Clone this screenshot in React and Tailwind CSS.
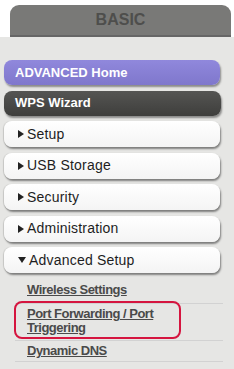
import React from "react";

const Right = () => (
  <svg width="6" height="8" viewBox="0 0 6 8" className="shrink-0">
    <path d="M0 0 L6 4 L0 8 Z" fill="#222" />
  </svg>
);
const Down = () => (
  <svg width="8" height="6" viewBox="0 0 8 6" className="shrink-0">
    <path d="M0 0 L8 0 L4 6 Z" fill="#222" />
  </svg>
);

function WhiteBtn({ label, open }) {
  return (
    <div className="h-[26px] mr-[14px] ml-[4px] rounded-[8px] bg-gradient-to-b from-white to-[#f4f4f4] shadow-[1px_2px_2px_rgba(0,0,0,0.45),-1px_0_1px_rgba(0,0,0,0.12)] flex items-center pl-[14px] gap-[3px] text-[14px] text-[#1e1e1e] tracking-[0.2px]">
      {open ? <Down /> : <Right />}
      <span>{label}</span>
    </div>
  );
}

export default function App() {
  return (
    <div className="w-[234px] h-[369px] overflow-hidden bg-[#e6e6e4] font-['Liberation_Sans',Arial,sans-serif]">
      <div className="bg-white pt-[5px] pl-[10px] pr-[3px]">
        <div className="h-[32px] rounded-t-[9px] bg-[#797977] border-b-[2px] border-[#666] flex items-center justify-center text-[16px] font-bold text-[#4e4e4c]">
          BASIC
        </div>
      </div>
      <div className="pt-[23px] flex flex-col gap-[5.5px]">
        <div className="h-[25px] mr-[14px] ml-[4px] rounded-[8px] bg-gradient-to-b from-[#9088dc] to-[#7f77cc] shadow-[1px_2px_2px_rgba(0,0,0,0.4)] flex items-center pl-[11px] text-[13px] font-bold text-white">
          ADVANCED Home
        </div>
        <div className="h-[25px] mr-[13px] ml-[4px] rounded-[8px] bg-gradient-to-b from-[#555553] to-[#3e3e3c] shadow-[1px_2px_2px_rgba(0,0,0,0.4)] flex items-center pl-[11px] text-[13px] font-bold text-white">
          WPS Wizard
        </div>
        <WhiteBtn label="Setup" />
        <WhiteBtn label="USB Storage" />
        <WhiteBtn label="Security" />
        <WhiteBtn label="Administration" />
        <WhiteBtn label="Advanced Setup" open />
      </div>
      <div className="ml-[15px] mr-[11px] text-[13px] font-bold text-[#4a4a4a] leading-[14px] tracking-[-0.5px]">
        <div className="pt-[10px] pb-[6px] pl-[12px] border-b border-[#d2d2d2]">
          <span className="underline">Wireless Settings</span>
        </div>
        <div className="relative pt-[3px] pb-[5px] pl-[12px] border-b border-[#d2d2d2]">
          <span className="underline">Port Forwarding / Port<br />Triggering</span>
          <div className="absolute left-[-1px] top-[-3px] w-[167px] h-[38px] rounded-[8px] border-[2px] border-[#d5153f]"></div>
        </div>
        <div className="pt-[3px] pb-[3px] pl-[12px] border-b border-[#d2d2d2]">
          <span className="underline">Dynamic DNS</span>
        </div>
        <div className="pt-[6px] pl-[12px]">
          <span className="underline">Remote Management</span>
        </div>
      </div>
    </div>
  );
}
